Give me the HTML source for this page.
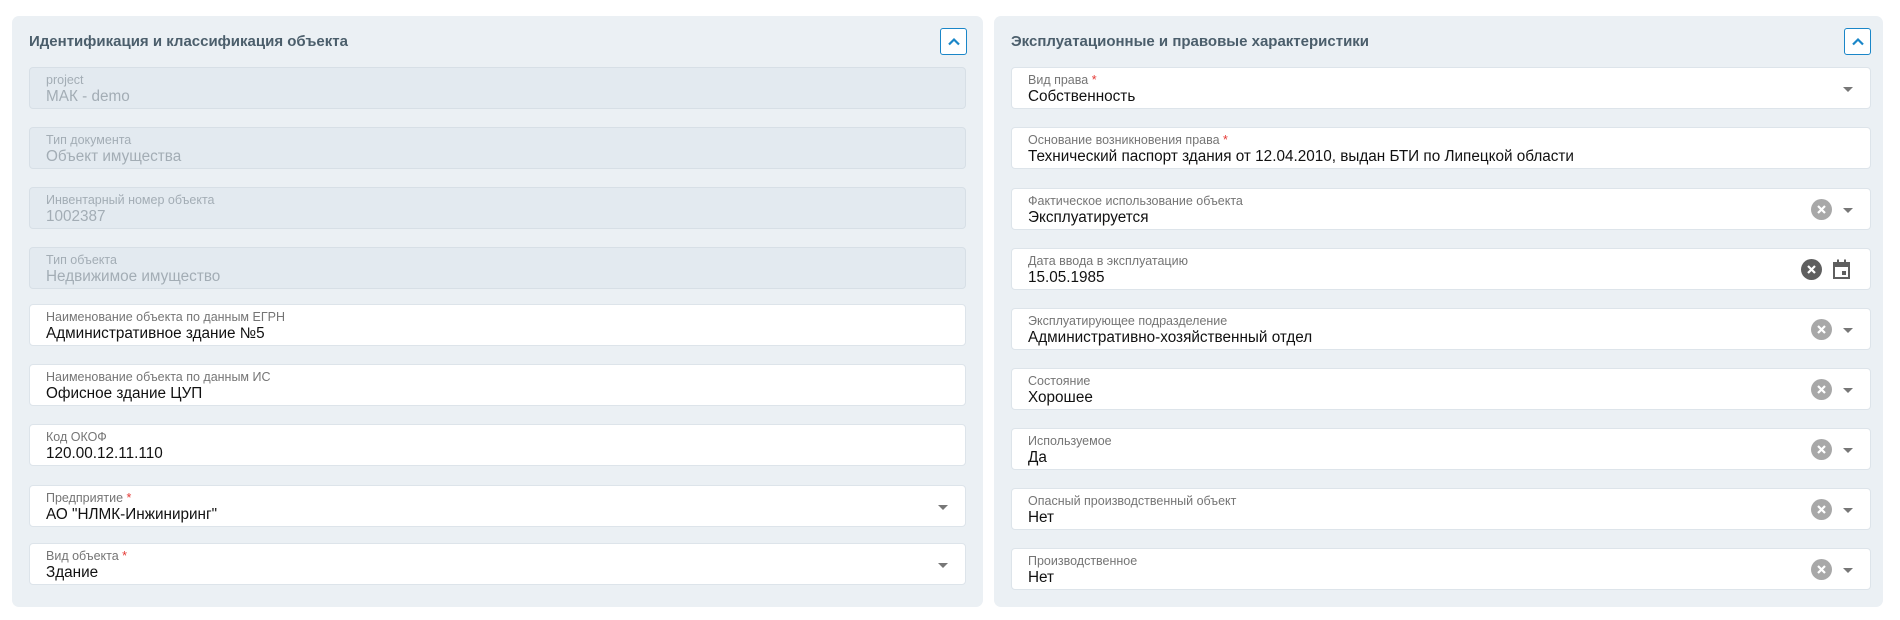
<!DOCTYPE html>
<html><head><meta charset="utf-8"><style>
*{box-sizing:border-box;margin:0;padding:0}
body{width:1900px;height:620px;background:#fff;font-family:"Liberation Sans",Arial,sans-serif;position:relative;overflow:hidden}
.panel{position:absolute;top:16px;height:591px;background:#ebf0f4;border-radius:7px}
.title{position:absolute;top:33px;font-size:15px;font-weight:bold;color:#4b5e6b}
.btn{position:absolute;top:28px;width:27px;height:27px;border:1px solid #1a86c8;border-radius:3px;background:#fff}
.f{position:absolute;height:42px;background:#fff;border:1px solid #dde4ea;border-radius:4px}
.f.d{background:#e3eaf0;border-color:#d7dfe6}
.l{position:absolute;left:16px;top:5px;font-size:12.5px;color:#757575}
.v{position:absolute;left:16px;top:20px;font-size:15.3px;color:#111}
.f.d .l,.f.d .v{color:#a3adb5}
.req{color:#e53935}
.arr{position:absolute;right:17px;top:19px;width:0;height:0;border-left:5px solid transparent;border-right:5px solid transparent;border-top:5px solid #777}
.clr{position:absolute;right:38px;top:10px;width:21px;height:21px;border-radius:50%;background:#a8a8a8}
.clr svg,.dclr svg{position:absolute;left:0;top:0}
.dclr{position:absolute;right:48px;top:10px;width:21px;height:21px;border-radius:50%;background:#5f5f5f}
</style></head><body>
<div class="panel" style="left:12px;width:971px"></div>
<div class="panel" style="left:994px;width:889px"></div>
<div class="title" style="left:29px">Идентификация и классификация объекта</div>
<div class="title" style="left:1011px">Эксплуатационные и правовые характеристики</div>
<div class="btn" style="left:940px"><svg width="27" height="27"><path d="M8 15.5l5-5 5 5" stroke="#1a86c8" stroke-width="2.2" fill="none"/></svg></div>
<div class="btn" style="left:1844px"><svg width="27" height="27"><path d="M8 15.5l5-5 5 5" stroke="#1a86c8" stroke-width="2.2" fill="none"/></svg></div>

<div class="f d" style="left:29px;width:937px;top:67px"><div class="l">project</div><div class="v">МАК - demo</div></div>
<div class="f d" style="left:29px;width:937px;top:127px"><div class="l">Тип документа</div><div class="v">Объект имущества</div></div>
<div class="f d" style="left:29px;width:937px;top:187px"><div class="l">Инвентарный номер объекта</div><div class="v">1002387</div></div>
<div class="f d" style="left:29px;width:937px;top:247px"><div class="l">Тип объекта</div><div class="v">Недвижимое имущество</div></div>
<div class="f" style="left:29px;width:937px;top:304px"><div class="l">Наименование объекта по данным ЕГРН</div><div class="v">Административное здание №5</div></div>
<div class="f" style="left:29px;width:937px;top:364px"><div class="l">Наименование объекта по данным ИС</div><div class="v">Офисное здание ЦУП</div></div>
<div class="f" style="left:29px;width:937px;top:424px"><div class="l">Код ОКОФ</div><div class="v">120.00.12.11.110</div></div>
<div class="f" style="left:29px;width:937px;top:485px"><div class="l">Предприятие <span class="req">*</span></div><div class="v">АО "НЛМК-Инжиниринг"</div><div class="arr"></div></div>
<div class="f" style="left:29px;width:937px;top:543px"><div class="l">Вид объекта <span class="req">*</span></div><div class="v">Здание</div><div class="arr"></div></div>

<div class="f" style="left:1011px;width:860px;top:67px"><div class="l">Вид права <span class="req">*</span></div><div class="v">Собственность</div><div class="arr"></div></div>
<div class="f" style="left:1011px;width:860px;top:127px"><div class="l">Основание возникновения права <span class="req">*</span></div><div class="v">Технический паспорт здания от 12.04.2010, выдан БТИ по Липецкой области</div></div>
<div class="f" style="left:1011px;width:860px;top:188px"><div class="l">Фактическое использование объекта</div><div class="v">Эксплуатируется</div><div class="clr"><svg width="21" height="21"><path d="M7 7l7 7M14 7l-7 7" stroke="#fff" stroke-width="2.2"/></svg></div><div class="arr"></div></div>
<div class="f" style="left:1011px;width:860px;top:248px"><div class="l">Дата ввода в эксплуатацию</div><div class="v">15.05.1985</div><div class="dclr"><svg width="21" height="21"><path d="M7 7l7 7M14 7l-7 7" stroke="#fff" stroke-width="2.2"/></svg></div><svg style="position:absolute;right:18px;top:9px" width="21" height="22"><path d="M3 5h15v15H3zM3 5v3h15" fill="none" stroke="#5f5f5f" stroke-width="2"/><rect x="3" y="5" width="15" height="3" fill="#5f5f5f"/><rect x="6" y="1.5" width="2" height="4" fill="#5f5f5f"/><rect x="13" y="1.5" width="2" height="4" fill="#5f5f5f"/><rect x="11" y="13" width="4" height="4" fill="#5f5f5f"/></svg></div>
<div class="f" style="left:1011px;width:860px;top:308px"><div class="l">Эксплуатирующее подразделение</div><div class="v">Административно-хозяйственный отдел</div><div class="clr"><svg width="21" height="21"><path d="M7 7l7 7M14 7l-7 7" stroke="#fff" stroke-width="2.2"/></svg></div><div class="arr"></div></div>
<div class="f" style="left:1011px;width:860px;top:368px"><div class="l">Состояние</div><div class="v">Хорошее</div><div class="clr"><svg width="21" height="21"><path d="M7 7l7 7M14 7l-7 7" stroke="#fff" stroke-width="2.2"/></svg></div><div class="arr"></div></div>
<div class="f" style="left:1011px;width:860px;top:428px"><div class="l">Используемое</div><div class="v">Да</div><div class="clr"><svg width="21" height="21"><path d="M7 7l7 7M14 7l-7 7" stroke="#fff" stroke-width="2.2"/></svg></div><div class="arr"></div></div>
<div class="f" style="left:1011px;width:860px;top:488px"><div class="l">Опасный производственный объект</div><div class="v">Нет</div><div class="clr"><svg width="21" height="21"><path d="M7 7l7 7M14 7l-7 7" stroke="#fff" stroke-width="2.2"/></svg></div><div class="arr"></div></div>
<div class="f" style="left:1011px;width:860px;top:548px"><div class="l">Производственное</div><div class="v">Нет</div><div class="clr"><svg width="21" height="21"><path d="M7 7l7 7M14 7l-7 7" stroke="#fff" stroke-width="2.2"/></svg></div><div class="arr"></div></div>
</body></html>
